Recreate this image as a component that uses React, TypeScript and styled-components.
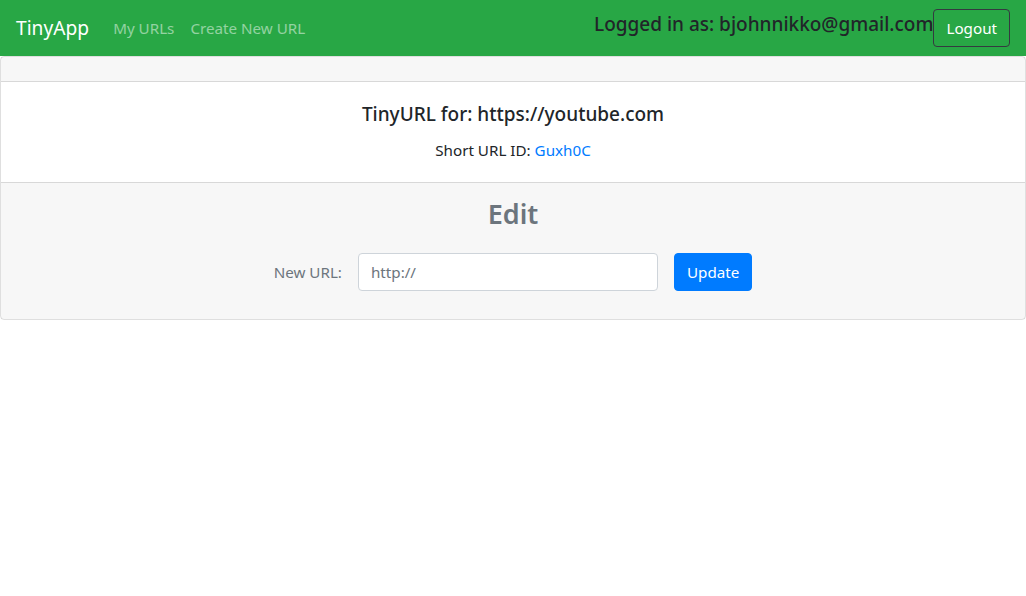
import React from "react";
import styled, { createGlobalStyle } from "styled-components";

const Global = createGlobalStyle`
  *, *::before, *::after { box-sizing: border-box; }
  html, body { margin: 0; padding: 0; background: #fff; }
  body {
    font-family: "Segoe UI", "Noto Sans", "Open Sans", sans-serif;
    font-size: 15.2px;
    line-height: 24px;
    color: #212529;
  }
`;

const NavBar = styled.nav`
  display: flex;
  align-items: center;
  justify-content: space-between;
  padding: 8px 16px;
  background: #28a745;
`;

const NavLeft = styled.div`
  display: flex;
  align-items: center;
`;

const Brand = styled.a`
  display: inline-block;
  padding: 5px 0;
  margin-right: 16px;
  font-size: 19.2px;
  line-height: 30px;
  color: #fff;
  text-decoration: none;
`;

const NavLink = styled.a`
  display: block;
  padding: 8px;
  color: rgba(255, 255, 255, 0.5);
  text-decoration: none;
`;

const NavRight = styled.div`
  display: flex;
  align-items: center;
`;

const LoggedIn = styled.h5`
  margin: 0 0 8px;
  font-size: 19px;
  font-weight: 500;
  line-height: 24px;
  color: #212529;
`;

const OutlineButton = styled.button`
  font-family: inherit;
  font-size: 15.2px;
  line-height: 24px;
  padding: 6px 12px;
  border: 1px solid #343a40;
  border-radius: 4px;
  background: transparent;
  color: #fff;
`;

const Card = styled.div`
  border: 1px solid rgba(0, 0, 0, 0.125);
  border-radius: 4px;
  display: flex;
  flex-direction: column;
  text-align: center;
`;

const CardHeader = styled.div`
  padding: 12px 20px;
  background: rgba(0, 0, 0, 0.03);
  border-bottom: 1px solid rgba(0, 0, 0, 0.125);
`;

const CardBody = styled.div`
  padding: 20px;
`;

const CardTitle = styled.h5`
  margin: 0 0 12px;
  font-size: 19px;
  font-weight: 500;
  line-height: 24px;
`;

const CardText = styled.p`
  margin: 0;
`;

const Link = styled.a`
  color: #007bff;
  text-decoration: none;
`;

const CardFooter = styled.div`
  padding: 12px 20px;
  background: rgba(0, 0, 0, 0.03);
  border-top: 1px solid rgba(0, 0, 0, 0.125);
`;

const EditTitle = styled.h2`
  margin: 0 0 20px;
  font-size: 27px;
  font-weight: 600;
  line-height: 38.4px;
  color: #6c757d;
`;

const Form = styled.form`
  display: flex;
  align-items: center;
  justify-content: center;
  gap: 16px;
  margin: 0 0 16px;
`;

const Label = styled.label`
  color: #6c757d;
`;

const Input = styled.input`
  width: 300px;
  height: 38px;
  padding: 6px 12px;
  font-family: inherit;
  font-size: 15.2px;
  color: #495057;
  background: #fff;
  border: 1px solid #ced4da;
  border-radius: 4px;
  &::placeholder { color: #6c757d; }
`;

const PrimaryButton = styled.button`
  font-family: inherit;
  font-size: 15.2px;
  line-height: 24px;
  padding: 6px 12px;
  border: 1px solid #007bff;
  border-radius: 4px;
  background: #007bff;
  color: #fff;
`;

export default function App() {
  return (
    <>
      <Global />
      <NavBar>
        <NavLeft>
          <Brand href="#">TinyApp</Brand>
          <NavLink href="#">My URLs</NavLink>
          <NavLink href="#">Create New URL</NavLink>
        </NavLeft>
        <NavRight>
          <LoggedIn>Logged in as: bjohnnikko@gmail.com</LoggedIn>
          <OutlineButton>Logout</OutlineButton>
        </NavRight>
      </NavBar>
      <Card>
        <CardHeader />
        <CardBody>
          <CardTitle>TinyURL for: https://youtube.com</CardTitle>
          <CardText>
            Short URL ID: <Link href="#">Guxh0C</Link>
          </CardText>
        </CardBody>
        <CardFooter>
          <EditTitle>Edit</EditTitle>
          <Form onSubmit={(e) => e.preventDefault()}>
            <Label>New URL:</Label>
            <Input type="text" placeholder="http://" />
            <PrimaryButton type="submit">Update</PrimaryButton>
          </Form>
        </CardFooter>
      </Card>
    </>
  );
}
